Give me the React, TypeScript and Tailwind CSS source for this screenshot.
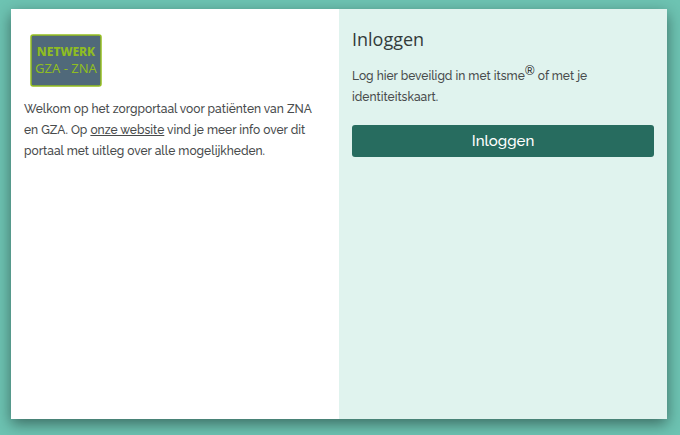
/**
 * Login page of the patient portal: welcome text on the left, login on the right
 */

function NetworkLogo() {
  return (
    <svg
      role="img"
      aria-label="Netwerk GZA - ZNA"
      viewBox="0 0 72 54"
      className="ml-1.5 h-[54px] w-[72px]"
    >
      <rect x="1" y="1" width="70" height="51" rx="2" fill="#50697a" stroke="#95bf1f" strokeWidth="1.5" />
      <g fill="#8fbd22" fontFamily="'Noto Sans', sans-serif" textAnchor="middle">
        <text x="36" y="22" fontSize="12" fontWeight="800">
          NETWERK
        </text>
        <text x="36" y="39" fontSize="13">
          GZA - ZNA
        </text>
      </g>
    </svg>
  );
}

function WelcomePanel() {
  return (
    <section className="bg-white px-[13px] pt-[25px]">
      <NetworkLogo />
      <p className="mt-[11px] text-xs/[21px] font-medium">
        Welkom op het zorgportaal voor patiënten van ZNA en GZA. Op{' '}
        <a href="#website" className="underline">
          onze website
        </a>{' '}
        vind je meer info over dit portaal met uitleg over alle mogelijkheden.
      </p>
    </section>
  );
}

function LoginPanel() {
  return (
    <section className="bg-[#e0f3ee] px-[13px] pt-4">
      <h1 className="font-['Open_Sans',sans-serif] text-lg/7 text-[#333b3a]">Inloggen</h1>
      <p className="mt-3 pr-10 text-xs/[21px] font-medium">
        Log hier beveiligd in met itsme
        <sup className="static align-super text-xs leading-none text-[#222]">®</sup> of met je identiteitskaart.
      </p>
      <button
        type="button"
        className="mt-[17px] h-8 w-full rounded-[3px] bg-[#276c5f] text-[15px] font-medium text-white"
      >
        Inloggen
      </button>
    </section>
  );
}

export default function App() {
  return (
    <div className="h-screen bg-[#6dc3b2] pt-[9px] pr-[13px] pb-4 pl-[11px] font-['Raleway','Lato',sans-serif] text-[#484b4c]">
      <main className="grid h-full grid-cols-2 shadow-[0_5px_14px_rgba(0,0,0,0.45)]">
        <WelcomePanel />
        <LoginPanel />
      </main>
    </div>
  );
}
